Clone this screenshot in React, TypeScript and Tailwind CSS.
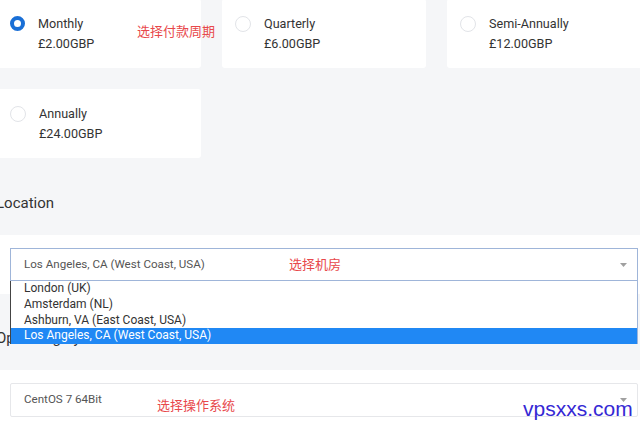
const cycles = [
  { name: "Monthly", price: "£2.00GBP", checked: true },
  { name: "Quarterly", price: "£6.00GBP", checked: false },
  { name: "Semi-Annually", price: "£12.00GBP", checked: false },
  { name: "Annually", price: "£24.00GBP", checked: false },
];

const locations = [
  "London (UK)",
  "Amsterdam (NL)",
  "Ashburn, VA (East Coast, USA)",
  "Los Angeles, CA (West Coast, USA)",
];

function Radio({ checked }: { checked: boolean }) {
  if (checked) {
    return <span className="mt-[2px] block h-[15px] w-[15px] shrink-0 rounded-full border-[4px] border-[#1a6fd6] bg-white" />;
  }
  return <span className="mt-[2px] block h-[16px] w-[16px] shrink-0 rounded-full border border-[#e2e4e8] bg-white" />;
}

function Arrow() {
  return (
    <svg width="7" height="4" viewBox="0 0 7 4" className="shrink-0">
      <path d="M0 0h7L3.5 4z" fill="#a0a0a0" />
    </svg>
  );
}

function SelectBox({ value, focused }: { value: string; focused?: boolean }) {
  return (
    <div
      className={
        focused
          ? "flex h-[33px] items-center justify-between border border-[#9fb5d9] pl-[13px] pr-[10px] text-[11.6px] text-[#555]"
          : "flex h-[34px] items-center justify-between rounded-[2px] border border-[#e6e7ea] pl-[13px] pr-[10px] text-[11.6px] text-[#555]"
      }
    >
      <span>{value}</span>
      <Arrow />
    </div>
  );
}

export default function App() {
  return (
    <div
      className="relative h-[430px] w-[640px] overflow-hidden bg-[#f5f6f8] text-[#333]"
      style={{ fontFamily: "Roboto, 'Noto Sans CJK SC', sans-serif" }}
    >
      <div className="ml-[-3px] mt-[-1px] grid grid-cols-[204px_204px_204px] gap-x-[21px] gap-y-[21px]">
        {cycles.map((c) => (
          <div key={c.name} className="flex h-[69px] items-start gap-[13px] rounded-[3px] bg-white pl-[13px] pt-[15px]">
            <Radio checked={c.checked} />
            <div className="text-[12.6px] leading-[20px]">
              <div>{c.name}</div>
              <div>{c.price}</div>
            </div>
          </div>
        ))}
      </div>

      <h2 className="ml-[-4px] mt-[35px] text-[15px] leading-[20px] font-normal text-[#333]">Location</h2>

      <div className="mt-[22px] bg-white py-[13px] pl-[10px] pr-[2px]">
        <SelectBox value="Los Angeles, CA (West Coast, USA)" focused />
      </div>

      <h2 className="ml-[-4px] mt-[34px] text-[15px] leading-[20px] font-normal text-[#333]">Operating System</h2>

      <div className="mt-[22px] bg-white py-[13px] pl-[10px] pr-[2px]">
        <SelectBox value="CentOS 7 64Bit" />
      </div>

      {/* open dropdown list */}
      <ul className="absolute left-[10px] top-[281px] w-[628px] border-l border-r border-l-[#444] border-r-[#9fb5d9] bg-white text-[12px] leading-[15.75px] text-[#333]">
        {locations.map((l, i) => (
          <li key={l} className={i === 3 ? "bg-[#2088f4] pl-[13px] text-white" : "pl-[13px]"}>
            {l}
          </li>
        ))}
      </ul>

      {/* annotations */}
      <span className="absolute left-[137px] top-[23px] text-[13px] leading-[18px] text-[#e8484b]">选择付款周期</span>
      <span className="absolute left-[289px] top-[256px] text-[13px] leading-[18px] text-[#e8484b]">选择机房</span>
      <span className="absolute left-[157px] top-[397px] text-[13px] leading-[18px] text-[#e8484b]">选择操作系统</span>
      <span
        className="absolute left-[523px] top-[396px] text-[21px] leading-[26px] text-[#3528d4]"
        style={{ fontFamily: "'Liberation Sans', sans-serif" }}
      >
        vpsxxs.com
      </span>
    </div>
  );
}
